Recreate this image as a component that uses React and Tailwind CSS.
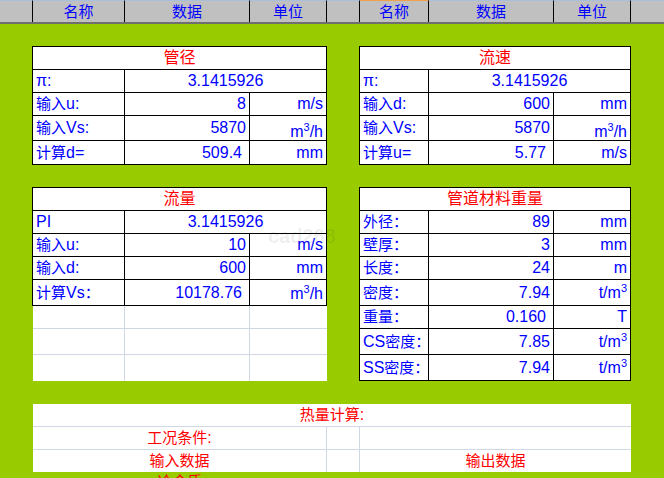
import React from "react";

const CJK_RE = /[\u3000-\u303f\u4e00-\u9fff\uff00-\uffef]/;
const SPLIT_RE = /[\u3000-\u303f\u4e00-\u9fff\uff00-\uffef]+|[^\u3000-\u303f\u4e00-\u9fff\uff00-\uffef]+/g;

function Txt({ s, c }) {
  const parts = s.match(SPLIT_RE) || [];
  return (
    <>
      {parts.map((p, i) =>
        CJK_RE.test(p) ? (
          <span key={i} className={c}>
            {p}
          </span>
        ) : (
          <span key={i}>{p}</span>
        )
      )}
    </>
  );
}

function Unit({ u }) {
  if (u === "m3/h")
    return (
      <span>
        m<sup className="text-[11px]">3</sup>/h
      </span>
    );
  if (u === "t/m3")
    return (
      <span>
        t/m<sup className="text-[11px]">3</sup>
      </span>
    );
  return <span>{u}</span>;
}

const H = {
  23: "h-[23px]",
  24: "h-[24px]",
  25: "h-[25px]",
  26: "h-[26px]",
};

function DataTable({ title, rows, c1, c2, c3, c23 }) {
  return (
    <div className="border-l border-t border-black bg-white flex flex-col text-[#0000ff]">
      <div className="h-[23px] border-b border-r border-black flex items-center justify-center text-[#ff0000]">
        <Txt s={title} c="text-[16px]" />
      </div>
      {rows.map((r, i) => (
        <div key={i} className={`flex border-b border-black ${H[r.h]}`}>
          <div className={`${c1} border-r border-black flex items-center pl-[3px] whitespace-nowrap`}>
            <Txt s={r.label} c="text-[15px]" />
          </div>
          {r.merged ? (
            <div className={`${c23} border-r border-black flex items-center justify-center`}>
              {r.merged}
            </div>
          ) : (
            <>
              <div
                className={`${c2} border-r border-black flex items-center justify-end ${
                  r.calc ? "pr-[7px]" : "pr-[3px]"
                }`}
              >
                {r.value}
              </div>
              <div
                className={`${c3} border-r border-black flex items-center justify-end pr-[3px] ${
                  r.low ? "pt-[7px]" : r.lowS ? "pt-[2px]" : ""
                }`}
              >
                <Unit u={r.unit} />
              </div>
            </>
          )}
        </div>
      ))}
    </div>
  );
}

const headerCells = [
  { w: "w-[33px]", t: "" },
  { w: "w-[92px]", t: "名称" },
  { w: "w-[125px]", t: "数据" },
  { w: "w-[77px]", t: "单位" },
  { w: "w-[33px]", t: "" },
  { w: "w-[69px]", t: "名称", orange: true },
  { w: "w-[125px]", t: "数据" },
  { w: "w-[77px]", t: "单位" },
];

export default function App() {
  const t1 = [
    { h: 23, label: "π:", merged: "3.1415926" },
    { h: 23, label: "输入u:", value: "8", unit: "m/s" },
    { h: 25, label: "输入Vs:", value: "5870", unit: "m3/h", low: true },
    { h: 24, label: "计算d=", value: "509.4", unit: "mm", calc: true },
  ];
  const t2 = [
    { h: 23, label: "π:", merged: "3.1415926" },
    { h: 23, label: "输入d:", value: "600", unit: "mm" },
    { h: 25, label: "输入Vs:", value: "5870", unit: "m3/h", low: true },
    { h: 24, label: "计算u=", value: "5.77", unit: "m/s", calc: true },
  ];
  const t3 = [
    { h: 23, label: "PI", merged: "3.1415926" },
    { h: 23, label: "输入u:", value: "10", unit: "m/s" },
    { h: 23, label: "输入d:", value: "600", unit: "mm" },
    { h: 26, label: "计算Vs：", value: "10178.76", unit: "m3/h", calc: true, lowS: true },
  ];
  const t4 = [
    { h: 23, label: "外径：", value: "89", unit: "mm" },
    { h: 23, label: "壁厚：", value: "3", unit: "mm" },
    { h: 23, label: "长度：", value: "24", unit: "m" },
    { h: 26, label: "密度：", value: "7.94", unit: "t/m3" },
    { h: 23, label: "重量：", value: "0.160", unit: "T", calc: true },
    { h: 26, label: "CS密度：", value: "7.85", unit: "t/m3" },
    { h: 26, label: "SS密度：", value: "7.94", unit: "t/m3" },
  ];

  return (
    <div className="relative w-[664px] h-[478px] overflow-hidden bg-[#99cc00] font-['Liberation_Sans','Noto_Sans_CJK_SC',sans-serif] text-[16px] leading-[18px]">
      {/* column header */}
      <div className="flex h-[24px] bg-[#c0c0c0] border-b-2 border-[#6f6f6f]">
        {headerCells.map((c, i) => (
          <div
            key={i}
            className={`${c.w} h-full border-r border-black border-t ${
              c.orange ? "border-t-[#f0a04b]" : "border-t-[#a9bfdc]"
            } flex items-center justify-center text-[#0000ff] text-[15px]`}
          >
            {c.t}
          </div>
        ))}
        <div className="flex-1 h-full border-t border-t-[#a9bfdc]" />
      </div>

      {/* first pair of tables */}
      <div className="mt-[22px] flex items-start pl-[32px] gap-[32px]">
        <DataTable title="管径" rows={t1} c1="w-[92px]" c2="w-[125px]" c3="w-[77px]" c23="w-[202px]" />
        <DataTable title="流速" rows={t2} c1="w-[69px]" c2="w-[125px]" c3="w-[77px]" c23="w-[202px]" />
      </div>

      {/* second pair of tables */}
      <div className="mt-[22px] flex items-start pl-[32px] gap-[32px]">
        <div className="flex flex-col">
          <DataTable title="流量" rows={t3} c1="w-[92px]" c2="w-[125px]" c3="w-[77px]" c23="w-[202px]" />
          <div className="ml-[1px] flex flex-col bg-white">
            {["h-[23px] border-b border-[#d0d7e5]", "h-[26px] border-b border-[#d0d7e5]", "h-[26px]"].map(
              (rc, i) => (
                <div key={i} className={`flex ${rc}`}>
                  <div className="w-[92px] border-r border-[#d0d7e5]" />
                  <div className="w-[125px] border-r border-[#d0d7e5]" />
                  <div className="w-[77px]" />
                </div>
              )
            )}
          </div>
        </div>
        <DataTable title="管道材料重量" rows={t4} c1="w-[69px]" c2="w-[125px]" c3="w-[77px]" c23="w-[202px]" />
      </div>

      {/* heat calculation */}
      <div className="mt-[23px] ml-[33px] w-[598px] text-[#ff0000]">
        <div className="bg-white">
          <div className="h-[23px] border-b border-[#d0d7e5] flex items-center justify-center">
            <Txt s="热量计算:" c="text-[15px]" />
          </div>
          <div className="h-[23px] border-b border-[#d0d7e5] flex">
            <div className="w-[294px] border-r border-[#d0d7e5] flex items-center justify-center">
              <Txt s="工况条件:" c="text-[15px]" />
            </div>
            <div className="w-[33px] border-r border-[#d0d7e5]" />
            <div className="flex-1" />
          </div>
          <div className="h-[22px] flex">
            <div className="w-[294px] border-r border-[#d0d7e5] flex items-center justify-center">
              <Txt s="输入数据" c="text-[15px]" />
            </div>
            <div className="w-[33px] border-r border-[#d0d7e5]" />
            <div className="flex-1 flex items-center justify-center">
              <Txt s="输出数据" c="text-[15px]" />
            </div>
          </div>
        </div>
        <div className="h-[23px] flex">
          <div className="w-[294px] flex items-start justify-center pt-[1px]">
            <Txt s="冷介质" c="text-[15px]" />
          </div>
        </div>
      </div>

      {/* watermark */}
      <div className="absolute left-[268px] top-[227px] text-[20px] font-bold text-black/[0.08] pointer-events-none">
        cad268
      </div>
    </div>
  );
}
